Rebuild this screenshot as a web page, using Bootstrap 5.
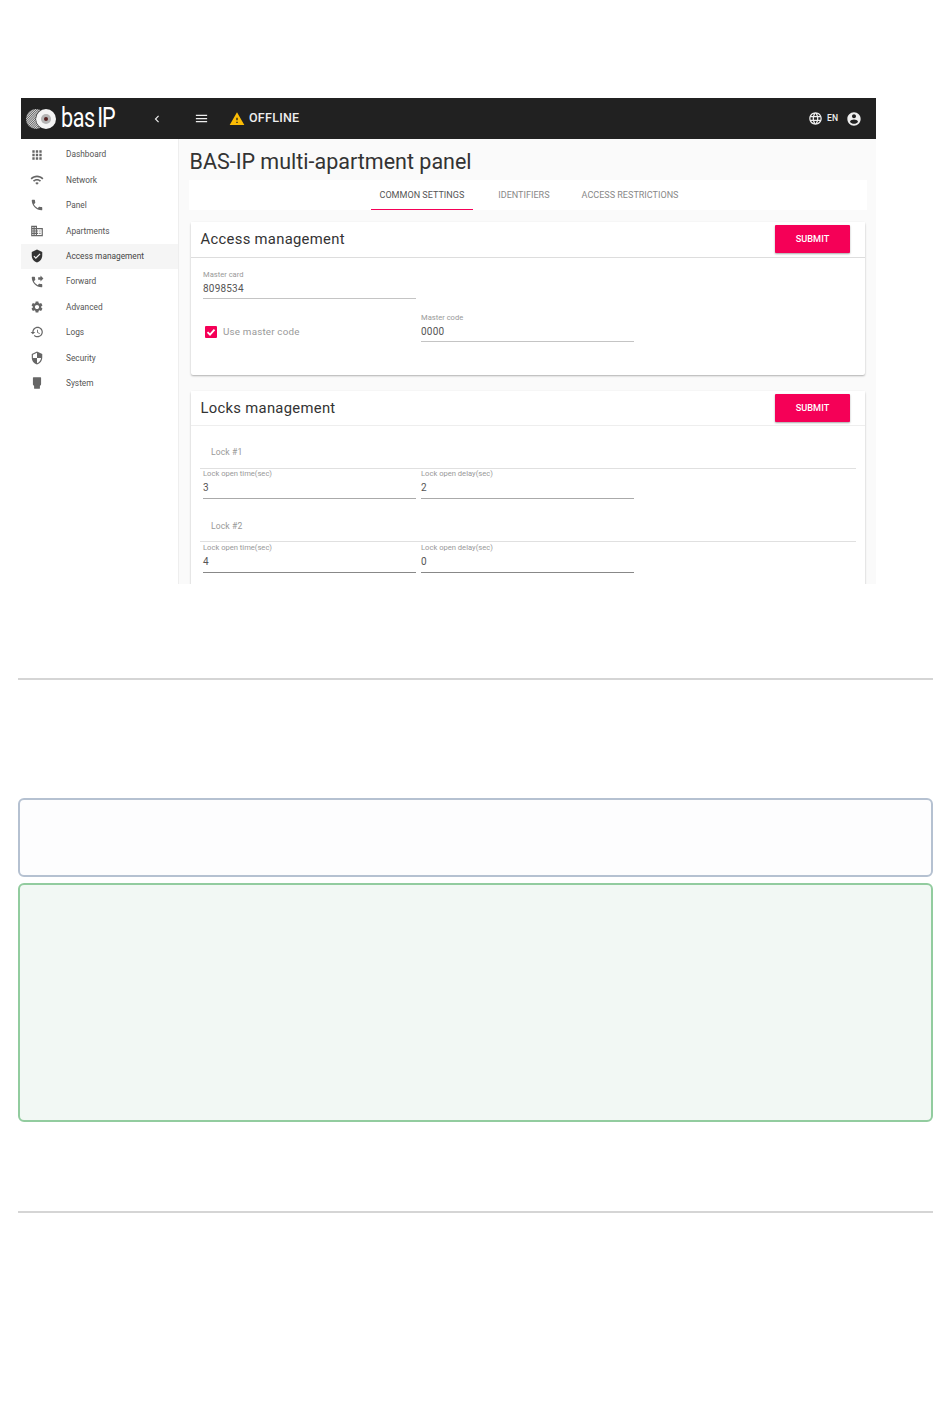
<!DOCTYPE html>
<html lang="en">
<head>
<meta charset="utf-8">
<title>BAS-IP multi-apartment panel</title>
<link rel="stylesheet" href="https://cdn.jsdelivr.net/npm/bootstrap@5.3.0/dist/css/bootstrap.min.css">
<style>
body{background:#fff;font-family:Roboto,"Liberation Sans",sans-serif;height:1419px;overflow:hidden;}
.shot-wrap{padding:98px 0 0 21px;}
.shot{width:855px;height:486px;overflow:hidden;background:#fafafa;}
.top-bar{height:41px;background:#212121;color:#eee;}
.brand-zone{width:158px;height:41px;}
.logo-svg{margin-left:4px;flex:none;}
.logo-word{display:block;width:56px;flex:none;font-weight:400;font-size:27px;line-height:41px;letter-spacing:-.5px;color:#fff;margin-left:4px;transform:scaleX(.8);transform-origin:left center;white-space:nowrap;}
.logo-word b{font-weight:400;margin-left:3px;letter-spacing:-1.5px;}
.chev{margin-left:33px;}
.bar-ico{fill:#eee;display:block;}
.bar-left{padding-left:15px;}
.warn-ico{display:block;margin-left:20px;}
.offline{font-size:12.5px;font-weight:500;letter-spacing:.25px;margin-left:4px;}
.bar-right{padding-right:14px;}
.lang{font-size:8.6px;font-weight:500;margin:0 8px 0 4px;}
.shot-body{height:445px;}
.side{width:158px;background:#fff;padding-top:3px;border-right:1px solid #eee;flex:none;}
.side .list-group-item{height:25.4px;padding:0 0 0 9px;border:0;background:transparent;color:#555;font-size:8.3px;display:flex;align-items:center;}
.side .list-group-item.active{background:#f5f5f5;color:#444;margin:0;}
.side svg{width:14px;height:14px;fill:#666;flex:none;margin-right:22px;}
.side .active svg{fill:#333;}
.main-zone{padding:0 9px 0 10px;min-width:0;}
.page-title{font-size:21.5px;font-weight:400;color:#333;line-height:26px;margin:10px 0 0;padding-left:.5px;}
.tab-strip{background:#fff;height:30px;margin-top:5px;}
.tab-strip .nav{padding-left:2px;}
.tab-strip .nav-link{height:30px;padding:0 9px;font-size:9.05px;line-height:30px;color:#888;margin-right:16px;border-bottom:1px solid transparent;}
.tab-strip .nav-link:nth-child(2){margin-right:14px;}
.tab-strip .nav-link:last-child{margin-right:0;}
.tab-strip .nav-link.active{color:#555;border-bottom-color:#f50057;}
.panel-box{margin:12px 2px 0 1.5px;border:0;border-radius:2px;background:#fff;box-shadow:0 1px 2px rgba(0,0,0,.3);}
.panel-box + .panel-box{margin-top:16px;}
.panel-head{height:36px;padding:3px 15px 0 10px;background:#fff;border-bottom:1px solid #ddd;}
.panel-box + .panel-box .panel-head{height:35px;border-bottom-color:#eee;}
.panel-head h2{font-size:14.8px;font-weight:400;margin:0;color:#333;letter-spacing:.3px;line-height:29px;}
.btn-pink{width:75px;height:28px;background:#f50057;color:#fff;font-size:9.2px;font-weight:500;border:0;border-radius:1px;padding:0;box-shadow:0 1px 2px rgba(0,0,0,.35);}
.btn-pink:hover{background:#f50057;color:#fff;}
.access-body{padding:11px 13px 33px 12.5px;}
.access-body .fld{padding-top:1px;}
.access-row{margin-top:13px;}
.fld{width:213px;height:30px;border-bottom:1px solid #c4c4c4;flex:none;}
.fld-row{gap:5px;}
.fld label{display:block;font-size:7.6px;line-height:10px;color:#999;margin:0 0 2px;}
.fld span{display:block;font-size:10px;line-height:14px;color:#555;letter-spacing:.2px;}
.chk-zone{width:213px;height:30px;padding:13px 0 0 2px;font-size:9.8px;line-height:14px;color:#999;letter-spacing:.2px;}
.chk-box{width:12px;height:12px;background:#f50057;border-radius:1px;margin:1px 6px 0 0;flex:none;}
.locks-body{padding:0 9px 40px 9.5px;}
.lock-head{height:43px;padding:19px 0 0 11px;font-size:8.6px;line-height:14px;color:#999;border-bottom:1px solid #e0e0e0;letter-spacing:.1px;}
.lock-head-next{padding-top:20px;margin-bottom:1px;}
.locks-body .fld-row{padding-left:3px;}
.locks-body .fld{border-bottom-color:#aaa;}
.locks-body .fld-last{border-bottom-color:#888;}
.rule{height:2px;background:#d5d5d5;margin:0 17px 0 18px;}
.rule-a{margin-top:94px;}
.note{margin-left:18px;margin-right:17px;border:2px solid;border-radius:6px;}
.note-gray{height:79px;margin-top:118px;border-color:#b5c1d1;background:#fdfdfe;}
.note-green{height:239px;margin-top:6px;border-color:#92cc9f;background:#f2f8f4;}
.rule-b{margin-top:89px;}
</style>
</head>
<body>
<div class="shot-wrap">
  <div class="shot">
    <div class="top-bar d-flex align-items-center">
      <div class="brand-zone d-flex align-items-center">
        <svg class="logo-svg" width="32" height="22" viewBox="0 0 32 22" aria-hidden="true">
          <defs><pattern id="hatch" width="1.6" height="1.6" patternUnits="userSpaceOnUse" patternTransform="rotate(45)"><rect width="1.6" height="1.6" fill="#555"/><rect width=".9" height="1.6" fill="#ddd"/></pattern></defs>
          <circle cx="11" cy="11" r="10" fill="url(#hatch)"/>
          <circle cx="21" cy="11" r="10.5" fill="#212121"/>
          <circle cx="21" cy="11" r="10" fill="#f4f4f4"/>
          <circle cx="21" cy="11" r="5" fill="#b5b5b5"/>
          <circle cx="21" cy="11" r="2" fill="#522"/>
        </svg>
        <span class="logo-word">bas<b>IP</b></span>
        <svg class="bar-ico chev" width="14" height="14" viewBox="0 0 24 24"><path d="M15.41 7.41L14 6l-6 6 6 6 1.41-1.41L10.83 12z"/></svg>
      </div>
      <div class="bar-left d-flex align-items-center flex-grow-1">
        <svg class="bar-ico" width="15" height="15" viewBox="0 0 24 24"><path d="M3 18h18v-2H3v2zm0-5h18v-2H3v2zm0-7v2h18V6H3z"/></svg>
        <svg class="warn-ico" width="16" height="16" viewBox="0 0 24 24" fill="#fbbc05"><path d="M1 21h22L12 2 1 21zm12-3h-2v-2h2v2zm0-4h-2v-4h2v4z"/></svg>
        <span class="offline">OFFLINE</span>
        <div class="bar-right ms-auto d-flex align-items-center">
          <svg class="bar-ico" width="15" height="15" viewBox="0 0 24 24"><path d="M11.99 2C6.47 2 2 6.48 2 12s4.47 10 9.99 10C17.52 22 22 17.52 22 12S17.52 2 11.99 2zm6.93 6h-2.95c-.32-1.25-.78-2.45-1.38-3.56 1.84.63 3.37 1.91 4.33 3.56zM12 4.04c.83 1.2 1.48 2.53 1.91 3.96h-3.82c.43-1.43 1.08-2.76 1.91-3.96zM4.26 14C4.1 13.36 4 12.69 4 12s.1-1.36.26-2h3.38c-.08.66-.14 1.32-.14 2 0 .68.06 1.34.14 2H4.26zm.82 2h2.95c.32 1.25.78 2.45 1.38 3.56-1.84-.63-3.37-1.9-4.33-3.56zm2.95-8H5.08c.96-1.66 2.49-2.93 4.33-3.56C8.81 5.55 8.35 6.75 8.03 8zM12 19.96c-.83-1.2-1.48-2.53-1.91-3.96h3.82c-.43 1.43-1.08 2.76-1.91 3.96zM14.34 14H9.66c-.09-.66-.16-1.32-.16-2 0-.68.07-1.35.16-2h4.68c.09.65.16 1.32.16 2 0 .68-.07 1.34-.16 2zm.25 5.56c.6-1.11 1.06-2.31 1.38-3.56h2.95c-.96 1.65-2.49 2.93-4.33 3.56zM16.36 14c.08-.66.14-1.32.14-2 0-.68-.06-1.34-.14-2h3.38c.16.64.26 1.31.26 2s-.1 1.36-.26 2h-3.38z"/></svg>
          <span class="lang">EN</span>
          <svg class="bar-ico" width="16" height="16" viewBox="0 0 24 24"><path d="M12 2C6.48 2 2 6.48 2 12s4.48 10 10 10 10-4.48 10-10S17.52 2 12 2zm0 3c1.66 0 3 1.34 3 3s-1.34 3-3 3-3-1.34-3-3 1.34-3 3-3zm0 14.2c-2.5 0-4.71-1.28-6-3.22.03-1.99 4-3.08 6-3.08 1.99 0 5.97 1.09 6 3.08-1.29 1.94-3.5 3.22-6 3.22z"/></svg>
        </div>
      </div>
    </div>
    <div class="shot-body d-flex">
      <div class="side list-group list-group-flush rounded-0">
        <a class="list-group-item"><svg viewBox="0 0 24 24"><path d="M4 8h4V4H4v4zm6 12h4v-4h-4v4zm-6 0h4v-4H4v4zm0-6h4v-4H4v4zm6 0h4v-4h-4v4zm6-10v4h4V4h-4zm-6 4h4V4h-4v4zm6 6h4v-4h-4v4zm0 6h4v-4h-4v4z"/></svg>Dashboard</a>
        <a class="list-group-item"><svg viewBox="0 0 24 24"><path d="M1 9l2 2c4.970-4.970 13.030-4.970 18 0l2-2C16.930 2.930 7.080 2.930 1 9zm8 8l3 3 3-3c-1.650-1.660-4.340-1.660-6 0zm-4-4l2 2c2.760-2.760 7.240-2.760 10 0l2-2C15.140 9.140 8.870 9.140 5 13z"/></svg>Network</a>
        <a class="list-group-item"><svg viewBox="0 0 24 24"><path d="M6.620 10.790c1.440 2.830 3.760 5.140 6.590 6.590l2.200-2.200c.27-.27.67-.36 1.020-.24 1.120.37 2.330.57 3.570.57.55 0 1 .45 1 1V20c0 .55-.45 1-1 1-9.390 0-17-7.610-17-17 0-.55.45-1 1-1h3.500c.55 0 1 .45 1 1 0 1.250.2 2.450.57 3.570.11.35.03.74-.25 1.020l-2.200 2.200z"/></svg>Panel</a>
        <a class="list-group-item"><svg viewBox="0 0 24 24"><path d="M12 7V3H2v18h20V7H12zM6 19H4v-2h2v2zm0-4H4v-2h2v2zm0-4H4V9h2v2zm0-4H4V5h2v2zm4 12H8v-2h2v2zm0-4H8v-2h2v2zm0-4H8V9h2v2zm0-4H8V5h2v2zm10 12h-8v-2h2v-2h-2v-2h2v-2h-2V9h8v10zm-2-8h-2v2h2v-2zm0 4h-2v2h2v-2z"/></svg>Apartments</a>
        <a class="list-group-item active"><svg viewBox="0 0 24 24"><path d="M12 1L3 5v6c0 5.550 3.840 10.740 9 12 5.160-1.260 9-6.450 9-12V5l-9-4zm-2 16l-4-4 1.410-1.410L10 14.170l6.590-6.590L18 9l-8 8z"/></svg>Access management</a>
        <a class="list-group-item"><svg viewBox="0 0 24 24"><path d="M18 11l5-5-5-5v3h-4v4h4v3zm2 4.500c-1.250 0-2.450-.2-3.570-.57-.35-.11-.74-.03-1.020.24l-2.200 2.200c-2.830-1.440-5.150-3.750-6.590-6.590l2.200-2.210c.28-.26.36-.65.25-1C8.700 6.450 8.500 5.250 8.500 4c0-.55-.45-1-1-1H4c-.55 0-1 .45-1 1 0 9.390 7.610 17 17 17 .55 0 1-.45 1-1v-3.500c0-.55-.45-1-1-1z"/></svg>Forward</a>
        <a class="list-group-item"><svg viewBox="0 0 24 24"><path d="M19.140 12.940c.04-.3.06-.61.06-.94 0-.32-.02-.64-.07-.94l2.030-1.580c.18-.14.23-.41.12-.61l-1.920-3.320c-.12-.22-.37-.29-.59-.22l-2.390.96c-.5-.38-1.030-.7-1.620-.94L14.400 2.810c-.04-.24-.24-.41-.48-.41h-3.840c-.24 0-.43.17-.47.41L9.250 5.350c-.59.24-1.130.57-1.620.94L5.240 5.330c-.22-.08-.47 0-.59.22L2.740 8.870c-.12.21-.08.47.12.61l2.030 1.580c-.05.3-.09.63-.09.94s.02.64.07.94l-2.030 1.580c-.18.14-.23.41-.12.61l1.920 3.320c.12.22.37.29.59.22l2.390-.96c.5.38 1.030.7 1.620.94l.36 2.540c.05.24.24.41.48.41h3.840c.24 0 .44-.17.47-.41l.36-2.540c.59-.24 1.130-.56 1.620-.94l2.390.96c.22.08.47 0 .59-.22l1.920-3.320c.12-.22.07-.47-.12-.61l-2.010-1.580zM12 15.600c-1.980 0-3.600-1.620-3.600-3.600s1.620-3.600 3.600-3.600 3.600 1.620 3.600 3.600-1.620 3.600-3.600 3.600z"/></svg>Advanced</a>
        <a class="list-group-item"><svg viewBox="0 0 24 24"><path d="M13 3c-4.970 0-9 4.030-9 9H1l3.890 3.890.07.14L9 12H6c0-3.870 3.130-7 7-7s7 3.130 7 7-3.130 7-7 7c-1.930 0-3.680-.79-4.940-2.060l-1.420 1.420C8.270 19.990 10.510 21 13 21c4.970 0 9-4.030 9-9s-4.030-9-9-9zm-1 5v5l4.280 2.540.72-1.210-3.500-2.080V8H12z"/></svg>Logs</a>
        <a class="list-group-item"><svg viewBox="0 0 24 24"><path d="M12 1L3 5v6c0 5.550 3.840 10.740 9 12 5.160-1.260 9-6.450 9-12V5l-9-4zm0 10.990h7c-.53 4.120-3.280 7.790-7 8.940V12H5V6.300l7-3.110v8.800z"/></svg>Security</a>
        <a class="list-group-item"><svg viewBox="0 0 24 24"><path d="M6 2h12c.6 0 1 .4 1 1v11c0 .6-.2 1-.5 1.300L17 17v4c0 .6-.4 1-1 1H8c-.6 0-1-.4-1-1v-4l-1.500-1.700C5.200 15 5 14.600 5 14V3c0-.6.4-1 1-1z"/></svg>System</a>
      </div>
      <div class="main-zone flex-grow-1">
        <h1 class="page-title">BAS-IP multi-apartment panel</h1>
        <div class="tab-strip">
          <nav class="nav justify-content-center">
            <a class="nav-link active">COMMON SETTINGS</a>
            <a class="nav-link">IDENTIFIERS</a>
            <a class="nav-link">ACCESS RESTRICTIONS</a>
          </nav>
        </div>
        <div class="card panel-box">
          <div class="card-header panel-head d-flex justify-content-between align-items-start rounded-0">
            <h2>Access management</h2>
            <button type="button" class="btn btn-pink">SUBMIT</button>
          </div>
          <div class="card-body access-body">
            <div class="fld"><label>Master card</label><span>8098534</span></div>
            <div class="d-flex fld-row access-row">
              <div class="chk-zone d-flex align-items-start">
                <span class="chk-box d-flex align-items-center justify-content-center"><svg width="12" height="12" viewBox="0 0 12 12" fill="none" stroke="#fff" stroke-width="1.8"><path d="M2.500 6.200l2.500 2.500 4.500-5"/></svg></span>
                <span>Use master code</span>
              </div>
              <div class="fld"><label>Master code</label><span>0000</span></div>
            </div>
          </div>
        </div>
        <div class="card panel-box">
          <div class="card-header panel-head d-flex justify-content-between align-items-start rounded-0">
            <h2>Locks management</h2>
            <button type="button" class="btn btn-pink">SUBMIT</button>
          </div>
          <div class="card-body locks-body">
            <div class="lock-head">Lock #1</div>
            <div class="d-flex fld-row">
              <div class="fld"><label>Lock open time(sec)</label><span>3</span></div>
              <div class="fld"><label>Lock open delay(sec)</label><span>2</span></div>
            </div>
            <div class="lock-head lock-head-next">Lock #2</div>
            <div class="d-flex fld-row">
              <div class="fld fld-last"><label>Lock open time(sec)</label><span>4</span></div>
              <div class="fld fld-last"><label>Lock open delay(sec)</label><span>0</span></div>
            </div>
          </div>
        </div>
      </div>
    </div>
  </div>
</div>
<div class="rule rule-a"></div>
<div class="note note-gray"></div>
<div class="note note-green"></div>
<div class="rule rule-b"></div>
</body>
</html>
